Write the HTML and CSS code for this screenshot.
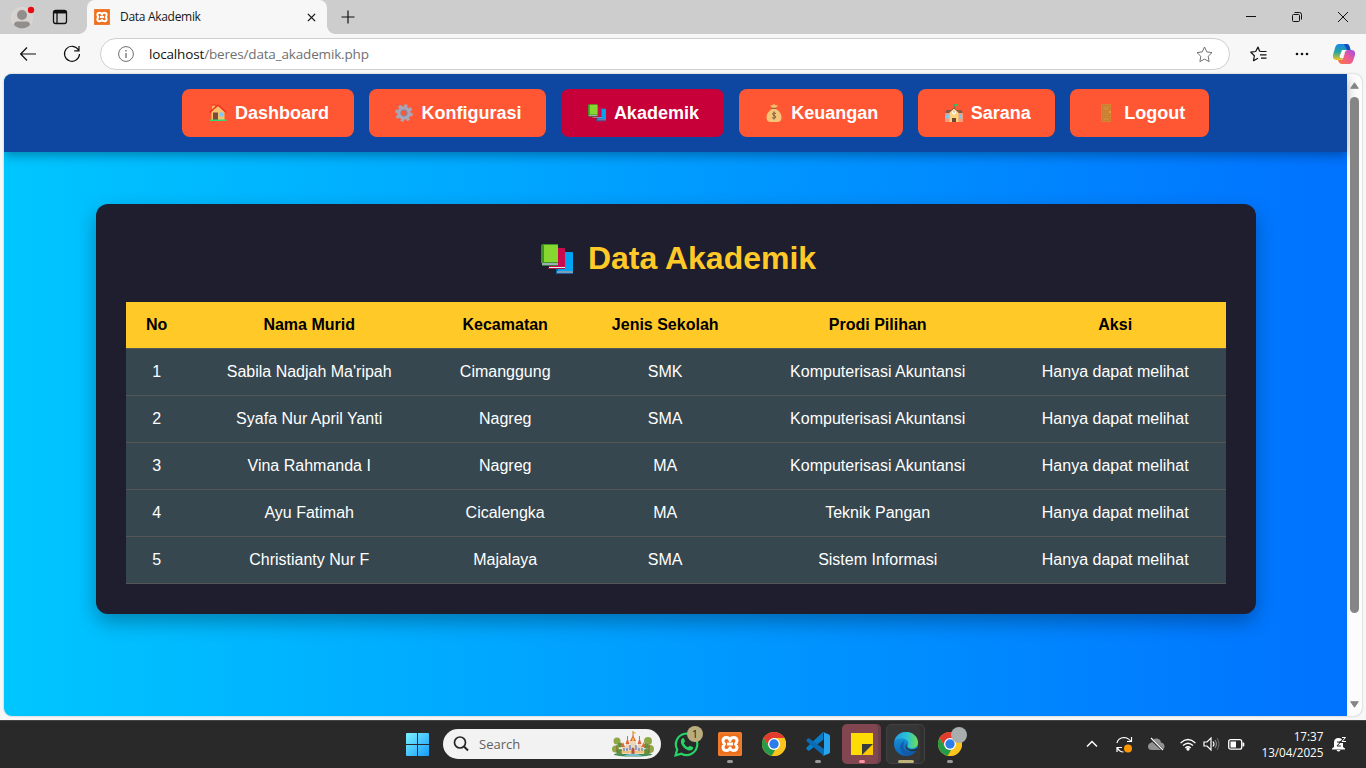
FILE: index.html
```html
<!DOCTYPE html>
<html lang="id">
<head>
<meta charset="utf-8">
<title>Data Akademik</title>
<link rel="stylesheet" href="styles.css">
</head>
<body>
<svg class="defs" aria-hidden="true">
  <defs>
    <linearGradient id="gWin" x1="0" y1="0" x2="1" y2="1"><stop offset="0" stop-color="#7df1ff"/><stop offset="1" stop-color="#159bfb"/></linearGradient>
    <linearGradient id="gEdge" x1="0" y1="0" x2="1" y2="0"><stop offset="0" stop-color="#1f9de4"/><stop offset=".55" stop-color="#2bc3d2"/><stop offset="1" stop-color="#6fe04f"/></linearGradient>
    <linearGradient id="gEdge2" x1="0" y1="0" x2="0" y2="1"><stop offset="0" stop-color="#1b9de2"/><stop offset="1" stop-color="#0b63b5"/></linearGradient>
    <linearGradient id="gCopA" x1="0" y1="0" x2="0" y2="1"><stop offset="0" stop-color="#1787ea"/><stop offset=".5" stop-color="#26a6a0"/><stop offset="1" stop-color="#f0c51c"/></linearGradient>
    <linearGradient id="gCopB" x1="1" y1="0" x2="0" y2="1"><stop offset="0" stop-color="#a44bea"/><stop offset=".5" stop-color="#ee5b91"/><stop offset="1" stop-color="#fb7a35"/></linearGradient>
    <symbol id="books" viewBox="0 0 32 31">
      <path fill="#0067a8" d="M15 10h2v20h-2z"/><path fill="#00a3f0" d="M17 8h14q1 0 1 1v18H17z"/><path fill="#7a9db8" d="M16 27h16v2H16z"/><path fill="#205f9c" d="M15 29h17v1H15z"/>
      <path fill="#cb0a4e" d="M8 4h15q1 0 1 1v18H8z"/><path fill="#eee" d="M8 23h16v1H8z"/><path fill="#9f1740" d="M7 24h17v1H7z"/>
      <path fill="#419323" d="M0 2q0-2 2-2h15v19H0z"/><path fill="#86d72f" d="M3 1h13q1 0 1 1v16H3z"/><path fill="#9badb9" d="M1 19h16v2H1z"/><path fill="#3d7b35" d="M1 21h16v1H1z"/>
    </symbol>
    <symbol id="xampp" viewBox="0 0 24 24"><rect width="24" height="24" rx="1.500" fill="#ed6f1c"/><rect x="1" y="1" width="22" height="22" rx="1" fill="none" stroke="#f79a5a" stroke-width=".6"/><path fill="none" stroke="#fff" stroke-width="3" stroke-linejoin="round" d="M12 8.500V8Q11 5.500 8.500 5.500 5 5.500 5 8.700 5 10.300 6.500 12 5 13.700 5 15.300q0 3.200 3.500 3.200 2.500 0 3.500-2.500 1 2.500 3.500 2.500 3.500 0 3.500-3.200 0-1.600-1.500-3.300 1.500-1.700 1.500-3.300 0-3.200-3.500-3.200Q13 5.500 12 8z"/><path stroke="#fff" stroke-width="3" d="M9 12h6"/></symbol>
    <symbol id="chrome" viewBox="0 0 24 24"><circle cx="12" cy="12" r="12" fill="#fbc51d"/><path fill="#e33b2e" d="M1.600 6a12 12 0 0 1 20.800 0H12L7 15z"/><path fill="#239b48" d="M1.600 6 7 15l6 3-3 5.800A12 12 0 0 1 1.600 6z"/><path fill="#fbc51d" d="M12 6h10.400A12 12 0 0 1 11.500 24l-2-.3L17 15z"/><circle cx="12" cy="12" r="6" fill="#fff"/><circle cx="12" cy="12" r="4.700" fill="#2b7de9"/></symbol>
  </defs>
</svg>

<header class="tabbar">
  <div class="tabbar-left">
    <svg class="avatar" width="24" height="28" viewBox="0 0 24 28"><circle cx="11" cy="14" r="10.500" fill="#d6d3d0" stroke="#dedbd5"/><circle cx="11" cy="11" r="5" fill="#918e8b"/><path fill="#918e8b" d="M3 21q0-3.500 3.500-3.500h9q3.500 0 3.500 3.500a11 11 0 0 1-16 0z"/><circle cx="20" cy="6" r="3.200" fill="#e90b12"/></svg>
    <svg class="tab-actions" width="16" height="16" viewBox="0 0 16 16" fill="none" stroke="#111" stroke-width="1.300"><rect x="1.500" y="1.500" width="13" height="13" rx="2.200"/><path stroke-width="2.500" d="M2 3.200h12"/><path d="M5 4v10"/></svg>
  </div>
  <div class="tab">
    <svg width="16" height="16"><use href="#xampp"/></svg>
    <span class="tab-title">Data Akademik</span>
    <svg class="tab-close" width="9" height="9" viewBox="0 0 10 10" stroke="#111" stroke-width="1.400"><path d="M1 1l8 8M9 1 1 9"/></svg>
  </div>
  <svg class="new-tab" width="14" height="14" viewBox="0 0 14 14" stroke="#111" stroke-width="1.200"><path d="M7 .5v13M.5 7h13"/></svg>
  <div class="window-controls">
    <svg width="10" height="10" viewBox="0 0 10 10" stroke="#111"><path d="M0 4.500h10"/></svg>
    <svg width="10" height="10" viewBox="0 0 10 10" stroke="#111" fill="none"><rect x=".5" y="2.500" width="7" height="7" rx="1"/><path d="M2.500.5h5q2 0 2 2v5"/></svg>
    <svg width="10" height="10" viewBox="0 0 10 10" stroke="#111"><path d="M0 0l10 10M10 0 0 10"/></svg>
  </div>
</header>

<div class="toolbar">
  <svg class="back" width="16" height="14" viewBox="0 0 16 14" fill="none" stroke="#111" stroke-width="1.200"><path d="M7 .5.700 7 7 13.500M.7 7H16"/></svg>
  <svg class="reload" width="18" height="18" viewBox="0 0 18 18" fill="none" stroke="#111" stroke-width="1.200"><path d="M15.500 5A7.500 7.500 0 1 0 16.500 9M16 1v4.800h-4.800"/></svg>
  <div class="address">
    <svg width="16" height="16" viewBox="0 0 16 16" fill="none" stroke="#6d6d6d"><circle cx="8" cy="8" r="7.400"/><path stroke-width="1.300" d="M8 7v5M8 4v1.400"/></svg>
    <span class="url"><b>localhost</b>/beres/data_akademik.php</span>
    <svg class="star" width="17" height="17" viewBox="0 0 17 17" fill="none" stroke="#707070" stroke-linejoin="round"><path d="M8.500 1l2.300 4.900 5.200.7-3.800 3.700.9 5.300-4.600-2.500-4.600 2.500.9-5.300L1 6.600l5.200-.7z"/></svg>
  </div>
  <svg class="favorites" width="17" height="16" viewBox="0 0 17 16" fill="none" stroke="#111" stroke-width="1.200" stroke-linejoin="round"><path d="M11 5.500 9.500 5 8 1 5.700 5.500.8 6.200l3.600 3.500-.9 5L8 12.200M11 5.500h5.500M10 8.800h6.500M11 12.200h5.500"/></svg>
  <svg class="more" width="14" height="4" viewBox="0 0 14 4" fill="#111"><circle cx="2" cy="2" r="1.300"/><circle cx="7" cy="2" r="1.300"/><circle cx="12" cy="2" r="1.300"/></svg>
  <svg class="copilot" width="22" height="20" viewBox="0 0 22 20"><path fill="url(#gCopA)" d="M6 0h8q2 0 3 4l.5 2H14q-2 0-3 4l-1 4q-.5 2-3 2H3q-4-1-3-5l2-7q1-4 4-4z"/><path fill="#174bc5" d="M11 0h3q2 0 3 4l.5 2H14q-2-4-3-6z"/><path fill="url(#gCopB)" d="M16 20H9q-3 0-4-4h3q2 0 3-4l1-4q.5-2 3-2h4q4 1 3 5l-2 6q-1 3-4 3z"/><path fill="#f7f7f7" d="M9 6h4.500q-1.500 1-2 3l-1.500 5H8q-2 0-1-3z"/></svg>
</div>

<div class="viewport">
  <div class="page">
    <nav class="nav">
      <a class="nav-link"><svg width="18" height="18" viewBox="0 0 18 18"><path fill="#f7b45c" d="M3 1h3v5H3z"/><path fill="#f3c36d" d="M2.500 8 9 2l6.500 6v8h-13z"/><path fill="none" stroke="#f12c26" stroke-width="1.200" d="M.5 8.500 9 1l8.500 7.500M2.500 1h4"/><path fill="#7b4b3d" d="M4 8.500h5V16H4z"/><path fill="#80c7fa" d="M10.500 8.500h4v4h-4z"/><path fill="#36d875" d="M.5 15.500h17V17H.5z"/></svg>Dashboard</a>
      <a class="nav-link"><svg width="18" height="18" viewBox="0 0 18 18"><circle cx="9" cy="9" r="7.300" fill="none" stroke="#a9a6b8" stroke-width="3" stroke-dasharray="3.130 2.604"/><circle cx="9" cy="9" r="4.800" fill="none" stroke="#a9a6b8" stroke-width="4"/><circle cx="9" cy="9" r="3.200" fill="none" stroke="#8b7f9a"/></svg>Konfigurasi</a>
      <a class="nav-link active"><svg width="18" height="18"><use href="#books"/></svg>Akademik</a>
      <a class="nav-link"><svg width="18" height="18" viewBox="0 0 18 18"><path fill="#f4c16e" d="M5 1l2 .5L9 0l2 1.500 2-.5-2 3H7z"/><path fill="#8c6047" d="M6.500 3.700h5v1h-5z"/><path fill="#f4c478" d="M7 5h4q5.500 3 5.500 8.500Q16.500 18 12 18H6q-4.500 0-4.500-4.500Q1.500 8 7 5z"/><path fill="none" stroke="#75563b" stroke-width=".9" d="M11 9.500q-3.500-1.500-3.500.5c0 1.500 3.300 1.200 3.300 3 0 2-3.800 1-3.800.5M9 7.500v8"/></svg>Keuangan</a>
      <a class="nav-link"><svg width="18" height="18" viewBox="0 0 18 18"><path fill="#f79b7b" d="M0 8h18v10H0z"/><path fill="#8b5848" d="M1.500 6h15L18 9H0z"/><path fill="#f9d37d" d="M4.500 8 9 4l4.500 4v10h-9z"/><path fill="none" stroke="#895747" d="M4 8.500 9 4l5 4.500"/><circle cx="9" cy="8.500" r="1.900" fill="#fff"/><path stroke="#555" stroke-width=".7" d="M9 7.200v1.500"/><path fill="#704637" d="M7 14h4v4H7z"/><path fill="#83c5ef" d="M1 10.500h3v4H1zM14 10.500h3v4h-3z"/><path stroke="#5a7b45" stroke-width=".8" d="M9.500 0v4"/><path fill="#28c95b" d="M9.500 0h3v2h-3z"/></svg>Sarana</a>
      <a class="nav-link logout"><svg width="18" height="18" viewBox="0 0 18 18"><path fill="#d98230" d="M4 0h10v18H4z"/><path fill="#cd8b3c" stroke="#c07a30" stroke-width=".7" d="M5.500 1.800h7v5h-7zM5.500 9h7v2.500h-7zM5.500 13.500h7v3h-7z"/><path fill="#ffc73e" d="M12 7.500h1.700v1H12z"/></svg>Logout</a>
    </nav>
    <main class="card">
      <h1 class="title"><svg width="32" height="31"><use href="#books"/></svg>Data Akademik</h1>
      <table class="table">
        <colgroup><col class="c-no"><col class="c-name"><col class="c-district"><col class="c-school"><col class="c-program"><col class="c-action"></colgroup>
        <thead><tr><th>No</th><th>Nama Murid</th><th>Kecamatan</th><th>Jenis Sekolah</th><th>Prodi Pilihan</th><th>Aksi</th></tr></thead>
        <tbody>
          <tr><td>1</td><td>Sabila Nadjah Ma'ripah</td><td>Cimanggung</td><td>SMK</td><td>Komputerisasi Akuntansi</td><td>Hanya dapat melihat</td></tr>
          <tr><td>2</td><td>Syafa Nur April Yanti</td><td>Nagreg</td><td>SMA</td><td>Komputerisasi Akuntansi</td><td>Hanya dapat melihat</td></tr>
          <tr><td>3</td><td>Vina Rahmanda I</td><td>Nagreg</td><td>MA</td><td>Komputerisasi Akuntansi</td><td>Hanya dapat melihat</td></tr>
          <tr><td>4</td><td>Ayu Fatimah</td><td>Cicalengka</td><td>MA</td><td>Teknik Pangan</td><td>Hanya dapat melihat</td></tr>
          <tr><td>5</td><td>Christianty Nur F</td><td>Majalaya</td><td>SMA</td><td>Sistem Informasi</td><td>Hanya dapat melihat</td></tr>
        </tbody>
      </table>
    </main>
  </div>
  <div class="scrollbar">
    <svg width="9" height="7" viewBox="0 0 9 7"><path fill="#858585" stroke="#858585" stroke-linejoin="round" d="M4.500.8 8.300 6.300H.7z"/></svg>
    <div class="thumb"></div>
    <svg width="9" height="7" viewBox="0 0 9 7"><path fill="#858585" stroke="#858585" stroke-linejoin="round" d="M4.500 6.200 8.300.7H.7z"/></svg>
  </div>
</div>

<footer class="taskbar">
  <div class="apps">
    <svg class="start" width="23" height="23" viewBox="0 0 23 23"><path fill="url(#gWin)" d="M0 1q0-1 1-1h10v11H0zM12 0h10q1 0 1 1v10H12zM0 12h11v11H1q-1 0-1-1zM12 12h11v10q0 1-1 1H12z"/></svg>
    <div class="search">
      <svg width="16" height="16" viewBox="0 0 16 16" fill="none" stroke="#252525" stroke-width="1.700"><circle cx="7" cy="6.500" r="5.500"/><path stroke-width="2" d="m11 10.500 4 4"/></svg>
      <span>Search</span>
      <svg class="castle" width="42" height="26" viewBox="0 0 42 26"><ellipse cx="21" cy="23.500" rx="19" ry="2" fill="#3d8b59"/><g fill="#8fa845"><circle cx="5" cy="10" r="3.500"/><circle cx="3.500" cy="18" r="3.500"/><circle cx="36" cy="10" r="4"/><circle cx="38" cy="18" r="4"/></g><g fill="#5f9140"><circle cx="8" cy="14" r="2.500"/><circle cx="8" cy="21" r="3"/><circle cx="34" cy="15" r="2.500"/><circle cx="34" cy="21" r="3"/></g><path fill="#ecd5b9" d="M10 15h22v8H10zM18 9h6v8h-6zM14 12h3v5h-3zM26 12h3v5h-3z"/><path fill="#df683b" d="m21 4 3 6h-6zM15.500 7l2 6h-4zM27.500 7l2 6h-4zM11 11l2 5H9zM32 11l1 5h-4z"/><path stroke="#c64c38" stroke-width=".8" d="M21 0v5M15.500 5v3M27.500 5v3"/><path fill="#f2ad35" d="M20.500 1h3v1.500h-3zM20 7h2v3h-2zM9 20.500h24v1H9z"/><path stroke="#6281c5" stroke-width="1.300" d="M12 17v3M15 17v3M18 14v5M24 14v5M27 17v3M30 17v3"/><path fill="#b45147" d="M19.500 18q1.500-3 3 0v5h-3z"/><path fill="#75bed2" d="M14 24q7-2.500 14 0l2 1H12z"/><path stroke="#835e3a" d="M5 14v8M37 14v8"/></svg>
    </div>
    <div class="app whatsapp"><svg width="25" height="25" viewBox="0 0 25 25"><path fill="none" stroke="#25d366" stroke-width="2.200" d="M1.600 23.400 3.200 17.500a10.700 10.700 0 1 1 4.200 4.200z"/><path fill="#25d366" d="M8 6.500q1-1 2 0l1 3-1.200 1.800q1.300 2.800 4.200 4l1.700-1.600 3 1.300q1 .6 0 2.200-1.800 2-4.700 1Q8.500 16 7 11q-.6-3 1-4.500z"/></svg><span class="badge">1</span></div>
    <div class="app running"><svg width="24" height="24"><use href="#xampp"/></svg></div>
    <div class="app"><svg width="24" height="24"><use href="#chrome"/></svg></div>
    <div class="app running"><svg width="24" height="24" viewBox="0 0 24 24"><path fill="#087dc7" d="M17 0v8L3.500 18.500Q2 19.500.5 17q-.7-1 .5-2z"/><path fill="#0b6bb5" d="M.5 8Q1.500 5.500 3.500 6.500L18 17v7L1 9.500q-.8-.7-.5-1.500z"/><path fill="#27a4ef" d="m17 0 6 2.500q1 .5 1 1.500v16q0 1-1 1.500L17 24q1-1 1-2V2q0-1-1-2z"/></svg></div>
    <div class="app notes running"><svg width="22" height="22" viewBox="0 0 22 22"><path fill="#fddb05" d="M0 0h22v12L12 22H0z"/><path fill="#fbc801" d="M22 11v11H11z"/><path fill="#3a3b3d" d="M11 11h11L11 22z"/></svg></div>
    <div class="app edge running"><svg width="24" height="24" viewBox="0 0 24 24"><circle cx="12" cy="12" r="12" fill="url(#gEdge2)"/><path fill="url(#gEdge)" d="M.4 9C2 3 7 0 12 0c7 0 12 5 12 10.500 0 4-3 6-6 6-3.500 0-5-1.500-4.400-2.700C16 10 12 6.500 8 6.500c-3.500 0-6 .8-7.600 2.500z"/><path fill="#125ba8" d="M10 9q-5 3-3.500 8.500C8 22 12 24 15 23.600c4-.8 6-3 8-5.900-4 2.500-12 3-13.500-2.500-.5-3 .5-5 .5-6.200z"/><path fill="#242a2d" d="M12.500 12q-1 4 3 5.400 4 1 7-1 1.500.2.700 1.500-2 1.300-6 1.300-6.500-1.500-5.500-6z"/></svg></div>
    <div class="app running profile"><svg width="24" height="24"><use href="#chrome"/></svg><span class="profile-dot"></span></div>
  </div>
  <div class="tray">
    <svg class="chevron" width="12" height="8" viewBox="0 0 12 8" fill="none" stroke="#fff" stroke-width="1.500"><path d="m1 6.500 5-5 5 5"/></svg>
    <svg class="sync" width="17" height="17" viewBox="0 0 17 17" fill="none" stroke="#fff" stroke-width="1.200"><path d="M1 7Q2 2 8 1.500q4 0 7 4M15.500 1v4.500H11M1 16v-4.500h5M1.500 12q2 4 6 4"/><circle cx="12" cy="12.500" r="4" fill="#ff9800" stroke="none"/></svg>
    <svg class="cloud" width="17" height="14" viewBox="0 0 17 14"><path fill="#929292" d="M4 13q-4 0-4-3.500 0-3 3.500-4Q5 1 9 1.500q3.500.5 4 4 3.500.5 3.500 4T13 13z"/><path stroke="#282828" stroke-width="2.500" d="m3 2 13 12"/><path stroke="#fff" stroke-width="1.200" d="m3 1 12 12"/></svg>
    <svg class="wifi" width="16" height="13" viewBox="0 0 16 13" fill="none" stroke="#fff" stroke-width="1.300"><path d="M.6 5Q8-2 15.400 5M3 7.500q5-4.600 10 0M5.300 10q2.700-2.500 5.400 0"/><circle cx="8" cy="11" r="1" fill="#fff"/></svg>
    <svg class="volume" width="17" height="14" viewBox="0 0 17 14" fill="none" stroke="#fff" stroke-width="1.200"><path d="M1 5h3l4-4v12L4 9H1z"/><path d="M10 4.500q2 2.500 0 5"/><path stroke="#888" d="M12 3q3 4 0 8"/><path stroke="#626262" d="M14 1q4 6 0 12"/></svg>
    <svg class="battery" width="17" height="11" viewBox="0 0 17 11"><rect x=".7" y=".7" width="13" height="9.500" rx="2" fill="none" stroke="#fff" stroke-width="1.300"/><path fill="#fff" d="M2.500 2.500H8v6H2.500zM14.500 3.500h1q.8 0 .8.8v2.400q0 .8-.8.8h-1z"/></svg>
    <div class="clock"><span>17:37</span><span>13/04/2025</span></div>
    <svg class="bell" width="15" height="16" viewBox="0 0 15 16"><path fill="#fff" d="M2 11V6.500Q2 2 6.500 2 11 2 11 6.500V11l2 1.500v1H0v-1zM4.500 14h4q-2 3-4 0z"/><path fill="none" stroke="#282828" stroke-width="3" d="M10 1.500h4l-4 4h4"/><path fill="none" stroke="#fff" d="M10 1.500h3.500l-3.500 4h4"/><path fill="none" stroke="#282828" d="M5 6h3.500L5 10h4"/></svg>
  </div>
</footer>
</body>
</html>
```
FILE: styles.css
```css
* { box-sizing: border-box; }
body { margin: 0; width: 1366px; height: 768px; overflow: hidden; display: flex; flex-direction: column; background: #f7f7f7; font-family: "Open Sans", "Noto Sans", sans-serif; }
svg { display: block; flex: none; }
.defs { position: absolute; width: 0; height: 0; }

.tabbar { height: 34px; display: flex; flex: none; align-items: center; background: #cdcdcd; }
.tabbar-left { width: 87px; height: 34px; display: flex; align-items: center; padding-left: 11px; }
.avatar { margin-top: 2px; }
.tab-actions { margin-left: 17px; }
.tab { position: relative; width: 240px; height: 34px; background: #f7f7f7; border-radius: 8px 8px 0 0; display: flex; align-items: center; padding: 0 11px 0 7px; }
.tab::before, .tab::after { content: ""; position: absolute; bottom: 0; width: 8px; height: 8px; }
.tab::before { left: -8px; background: radial-gradient(circle at 0 0, transparent 7.500px, #f7f7f7 8px); }
.tab::after { right: -8px; background: radial-gradient(circle at 100% 0, transparent 7.500px, #f7f7f7 8px); }
.tab-title { margin-left: 10px; margin-top: -1px; font-size: 12px; letter-spacing: -.3px; color: #161616; white-space: nowrap; }
.tab-close { margin-left: auto; }
.new-tab { margin-left: 14px; }
.window-controls { margin-left: auto; margin-right: 18px; display: flex; gap: 36px; }

.toolbar { height: 40px; flex: none; display: flex; align-items: center; padding-left: 20px; }
.reload { margin-left: 27px; }
.address { width: 1130px; height: 32px; margin-left: 19px; border: 1px solid #cfcfcf; border-radius: 16px; background: #fff; display: flex; align-items: center; padding: 0 16px 0 17px; }
.url { margin-left: 15px; font-size: 13.500px; letter-spacing: -.16px; color: #707070; white-space: nowrap; }
.url b { font-weight: 400; color: #111; }
.star { margin-left: auto; }
.favorites { margin-left: 20px; }
.more { margin-left: 28px; }
.copilot { margin-left: 24px; }

.viewport { width: 1358px; height: 642px; margin-left: 4px; flex: none; display: flex; border-radius: 8px; overflow: hidden; background: #fcfcfc; box-shadow: 0 0 2px #aaa; }
.page { width: 1343px; height: 642px; background: linear-gradient(90deg, #00c6ff, #0072ff); font-family: Arial, "Liberation Sans", sans-serif; display: flex; flex-direction: column; align-items: center; }
.nav { width: 100%; height: 78px; flex: none; background: #0d47a1; display: flex; justify-content: center; gap: 15px; padding: 15px 0 15px 40px; box-shadow: 0 4px 10px rgba(0,0,0,.3); }
.nav-link { height: 48px; border-radius: 8px; background: #ff5733; color: #fff; font-size: 18px; font-weight: 700; display: flex; align-items: center; gap: 8px; padding: 0 24.600px 0 26.800px; }
.nav-link.logout { gap: 9px; padding-right: 23.600px; }
.nav-link.active { background: #c70039; }
.card { width: 1160px; height: 410px; margin-top: 52px; padding: 30px; background: #1e1e2e; border-radius: 12px; box-shadow: 0 8px 20px rgba(0,0,0,.3); }
.title { margin: 0; height: 68px; padding: 4px 0 0 6px; display: flex; justify-content: center; align-items: flex-start; gap: 15px; font-size: 32px; line-height: 40px; font-weight: 700; color: #ffca28; }
.title svg { margin-top: 6px; }
.table { width: 1100px; table-layout: fixed; border-collapse: separate; border-spacing: 0; text-align: center; font-size: 16px; color: #fff; }
.c-no { width: 61px; }
.c-name { width: 244px; }
.c-district { width: 148px; }
.c-school { width: 172px; }
.c-program { width: 253px; }
.c-action { width: 222px; }
.table th, .table td { height: 47px; padding: 0 0 0 1.400px; border-bottom: 1px solid #555; }
.table th { background: #ffca28; color: #000; }
.table td { background: #37474f; }

.scrollbar { width: 15px; display: flex; flex-direction: column; align-items: center; padding: 8px 0; }
.thumb { width: 9px; height: 516px; margin: 8px 0 auto; border-radius: 5px; background: #858585; }

.taskbar { height: 48px; margin-top: 4px; flex: none; background: #292929; border-top: 1px solid #444; display: flex; align-items: center; padding-bottom: 1px; }
.apps { display: flex; align-items: center; padding-left: 406px; }
.search { width: 218px; height: 30px; margin: 0 3px 0 14px; border-radius: 15px; background: #f2f2f2; display: flex; align-items: center; padding: 0 7px 0 10px; color: #606060; font-size: 13px; }
.search span { margin-left: 10px; }
.castle { margin-left: auto; }
.app { position: relative; width: 44px; height: 40px; display: flex; align-items: center; justify-content: center; }
.running::after { content: ""; position: absolute; bottom: 1px; left: 19px; width: 6px; height: 3px; border-radius: 2px; background: #999; }
.badge { position: absolute; left: 23px; top: 3px; width: 16px; height: 16px; border-radius: 8px; background: #b9ad7d; color: #222; font-size: 11px; line-height: 16px; text-align: center; }
.app .badge { top: 2px; }
.notes { width: 39px; margin: 0 2px; background: #824650; border-radius: 5px; box-shadow: inset -3px 0 #69404a; }
.notes::after { left: 17px; background: #ff91a0; }
.edge { width: 39px; margin: 0 3px; background: #363636; border: 1px solid #414141; border-radius: 5px; box-shadow: inset -4px 0 #303030; }
.edge::after { bottom: 0; left: 11px; width: 16px; background: #beb37b; }
.profile-dot { position: absolute; left: 23px; top: 3px; width: 16px; height: 16px; border-radius: 50%; background: #a8adad; }
.tray { margin-left: auto; margin-right: 19.500px; display: flex; align-items: center; color: #fff; }
.sync { margin-left: 18px; }
.cloud { margin-left: 15px; }
.wifi { margin-left: 15px; }
.volume { margin-left: 7px; }
.battery { margin-left: 8px; }
.clock { width: 78px; margin-left: 1px; display: flex; flex-direction: column; align-items: flex-end; font-size: 11.700px; line-height: 16px; white-space: nowrap; }
.bell { margin-left: 8px; }
```
